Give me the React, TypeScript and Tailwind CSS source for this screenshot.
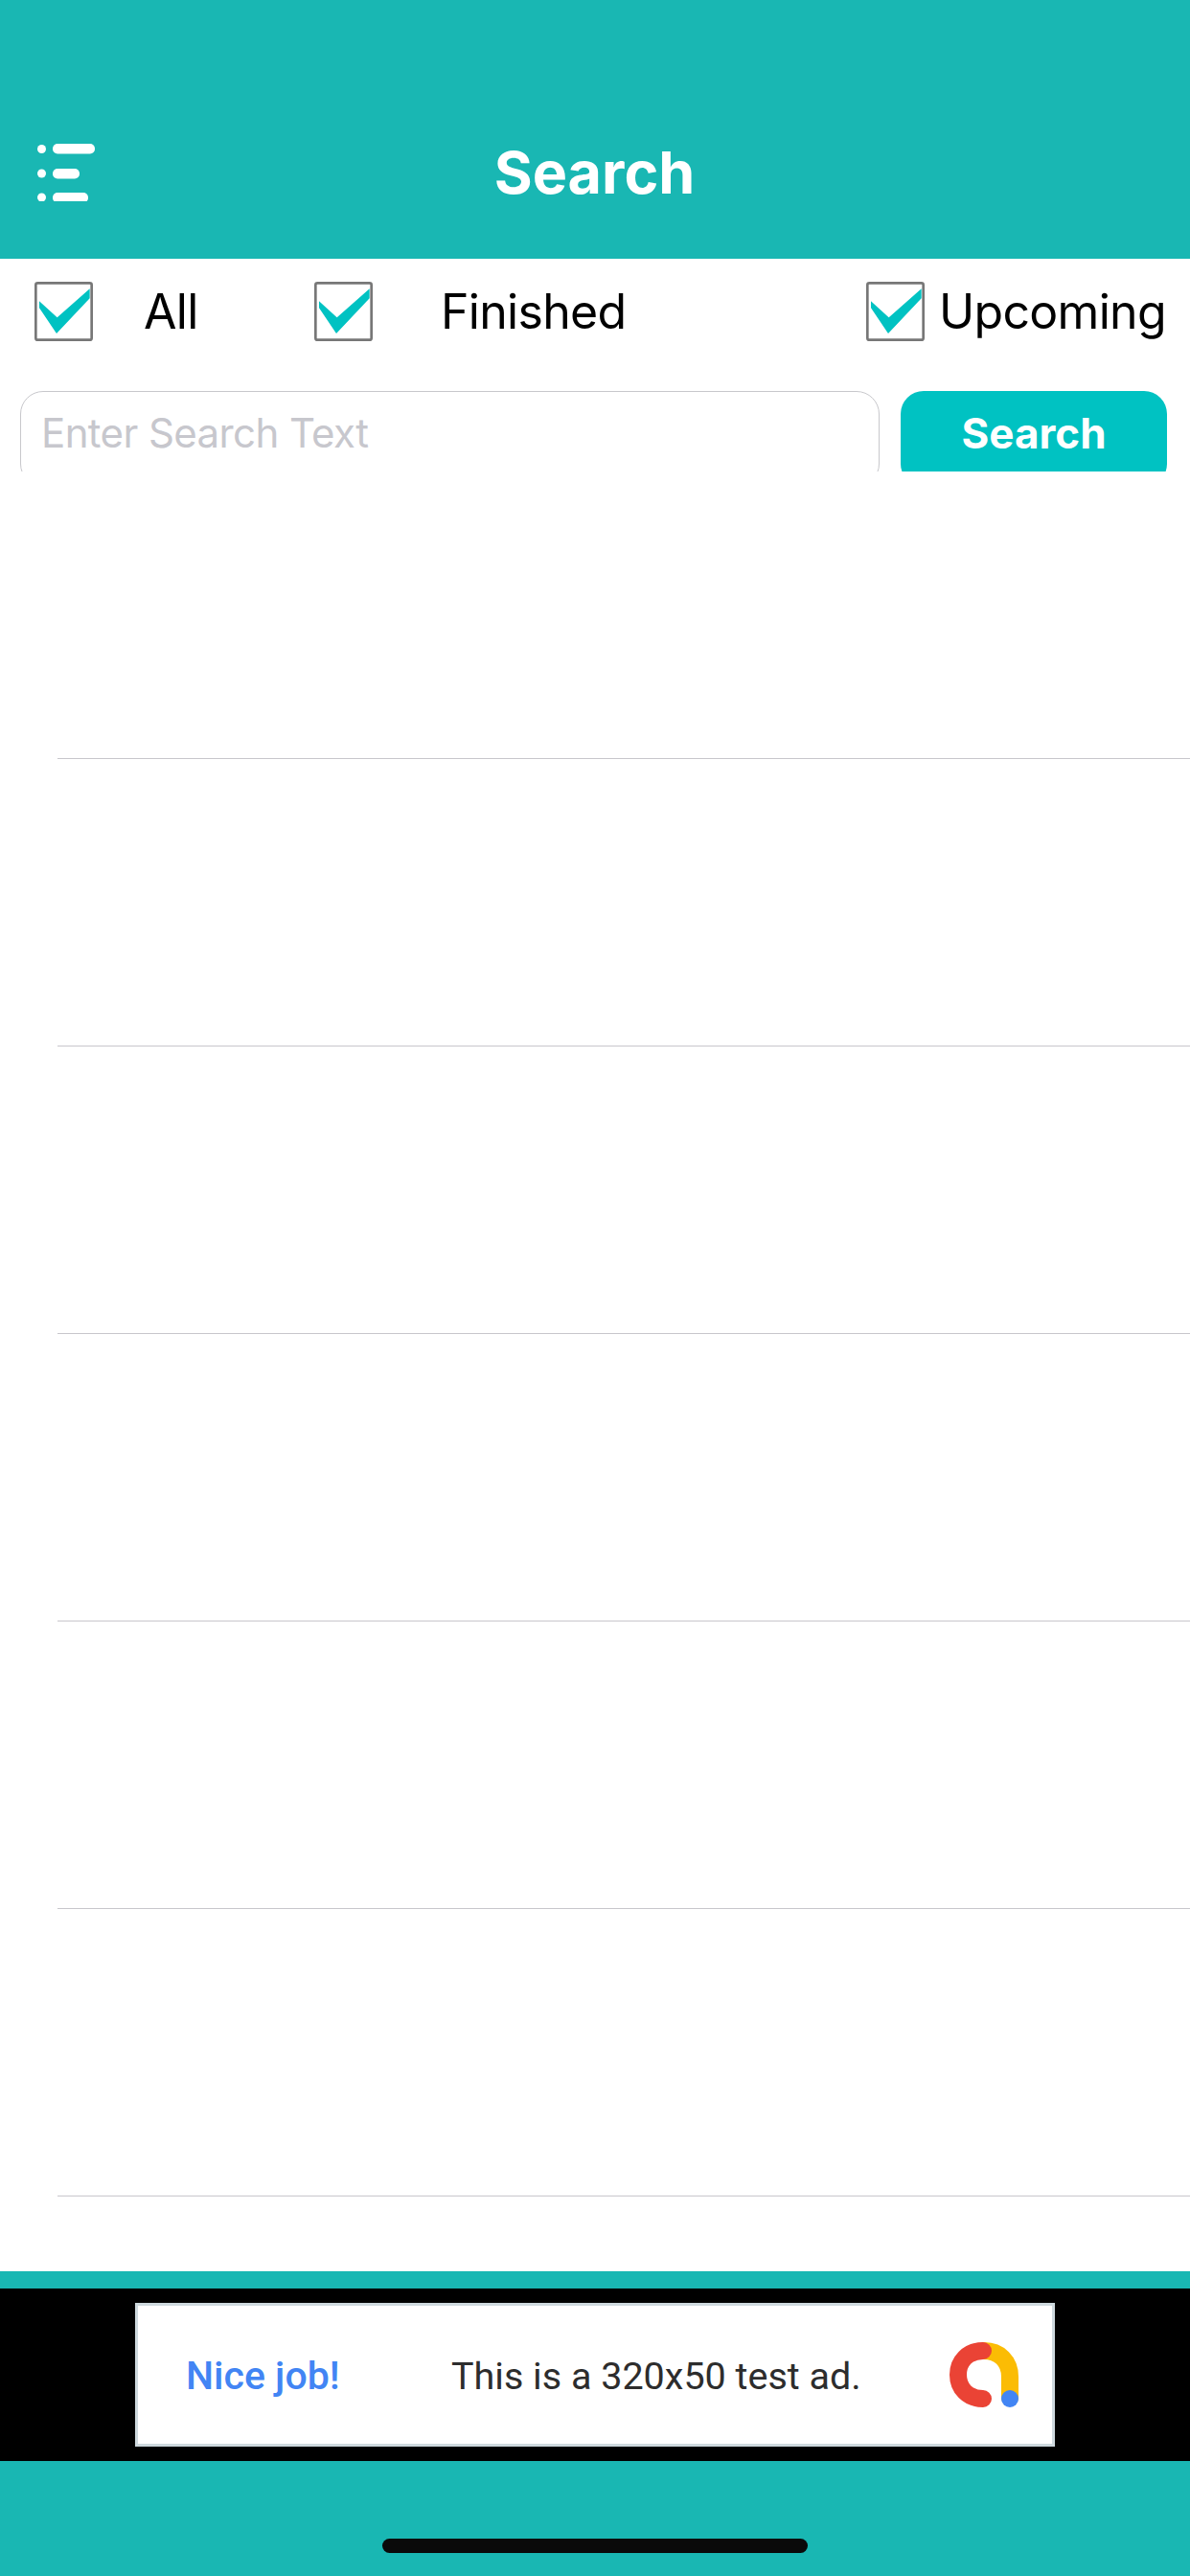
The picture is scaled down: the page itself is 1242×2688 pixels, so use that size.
const ROWS = [0, 1, 2, 3, 4, 5];

const FILTERS = [
  { label: 'All', width: 'w-[292px]', gap: 'gap-[53px]' },
  { label: 'Finished', width: 'w-[576px]', gap: 'gap-[71px]' },
  { label: 'Upcoming', width: 'w-[338px]', gap: 'gap-[15px]' },
];

function MenuIcon() {
  return (
    <svg width="60" height="60" viewBox="0 0 60 60" className="shrink-0 fill-white">
      <circle cx="4.5" cy="5.5" r="4.5" />
      <rect x="16" y="0" width="44" height="10.5" rx="5" />
      <circle cx="4.5" cy="31" r="4.5" />
      <rect x="16" y="26" width="28" height="10.5" rx="5" />
      <circle cx="4.5" cy="56" r="4.5" />
      <rect x="16" y="51" width="37" height="10.5" rx="5" />
    </svg>
  );
}

function Checkbox() {
  return (
    <svg width="61" height="62" viewBox="47 43 183 186" className="shrink-0">
      <rect x="51" y="47" width="175" height="178" rx="6" fill="#fff" stroke="#777" strokeWidth="8" />
      <polygon points="62,104 118,155 220,65 220,95 116,205 62,125" fill="#00c2c2" />
    </svg>
  );
}

function AdLogo() {
  return (
    <svg width="72" height="68" viewBox="0 0 72 68" fill="none" strokeLinecap="round" strokeWidth="18">
      <path d="M36 9 C52 9 63 20 63 36 V58" stroke="#fbbc04" />
      <path d="M35 9 C19 9 9 20 9 34 C9 48 19 59 35 59" stroke="#ea4335" />
      <circle cx="63" cy="59" r="9" fill="#4285f4" />
    </svg>
  );
}

export default function App() {
  return (
    <div className="w-[1242px] h-[2688px] flex flex-col bg-white font-['Inter',sans-serif]">
      {/* header */}
      <div className="h-[270px] shrink-0 bg-[#19b7b3] flex items-start pt-[150px] pl-[39px]">
        <MenuIcon />
        <h1 className="flex-1 pr-[100px] -mt-[6px] text-center text-[61px] leading-[72px] font-bold text-white">
          Search
        </h1>
      </div>

      {/* filters */}
      <div className="h-[138px] shrink-0 flex items-start pt-[24px] pl-[36px]">
        {FILTERS.map((item) => (
          <div key={item.label} className={`flex items-center ${item.width} ${item.gap}`}>
            <Checkbox />
            <span className="text-[50px] leading-[62px] tracking-[-0.7px] text-black">{item.label}</span>
          </div>
        ))}
      </div>

      <div className="h-[84px] shrink-0 overflow-hidden flex items-start gap-[22px] pl-[21px]">
        <input
          placeholder="Enter Search Text"
          className="w-[897px] h-[100px] pl-[21px] pb-[14px] rounded-[24px] border border-[#c8c8cc] bg-white text-[42px] tracking-[-0.6px] outline-none placeholder:text-[#c7c7cd]"
        />
        <button className="w-[278px] h-[100px] pb-[12px] rounded-[24px] bg-[#00c2c2] text-[44px] font-bold text-white">
          Search
        </button>
      </div>

      {/* empty result rows */}
      <div className="flex-1">
        {ROWS.map((row) => (
          <div key={row} className="h-[300px] flex flex-col justify-end pl-[60px]">
            <div className="h-px bg-[#c8c7cc]" />
          </div>
        ))}
      </div>

      {/* footer with banner */}
      <div className="h-[318px] shrink-0 bg-[#19b7b3] pt-[18px] flex flex-col">
        <div className="h-[180px] bg-black flex items-center justify-center">
          <div className="w-[960px] h-[150px] border-[3px] border-[#ced9de] bg-white flex items-center pl-[50px] pr-[35px]">
            <span className="w-[277px] pt-[4px] text-[41px] font-medium text-[#4285f4] font-['Roboto',sans-serif]">Nice job!</span>
            <span className="flex-1 pt-[4px] text-[39.5px] text-[#2d2d2d] font-['Roboto',sans-serif]">This is a 320x50 test ad.</span>
            <AdLogo />
          </div>
        </div>
        <div className="pt-[81px] flex justify-center">
          <div className="w-[444px] h-[15px] rounded-full bg-[#0a0a0a]" />
        </div>
      </div>
    </div>
  );
}
